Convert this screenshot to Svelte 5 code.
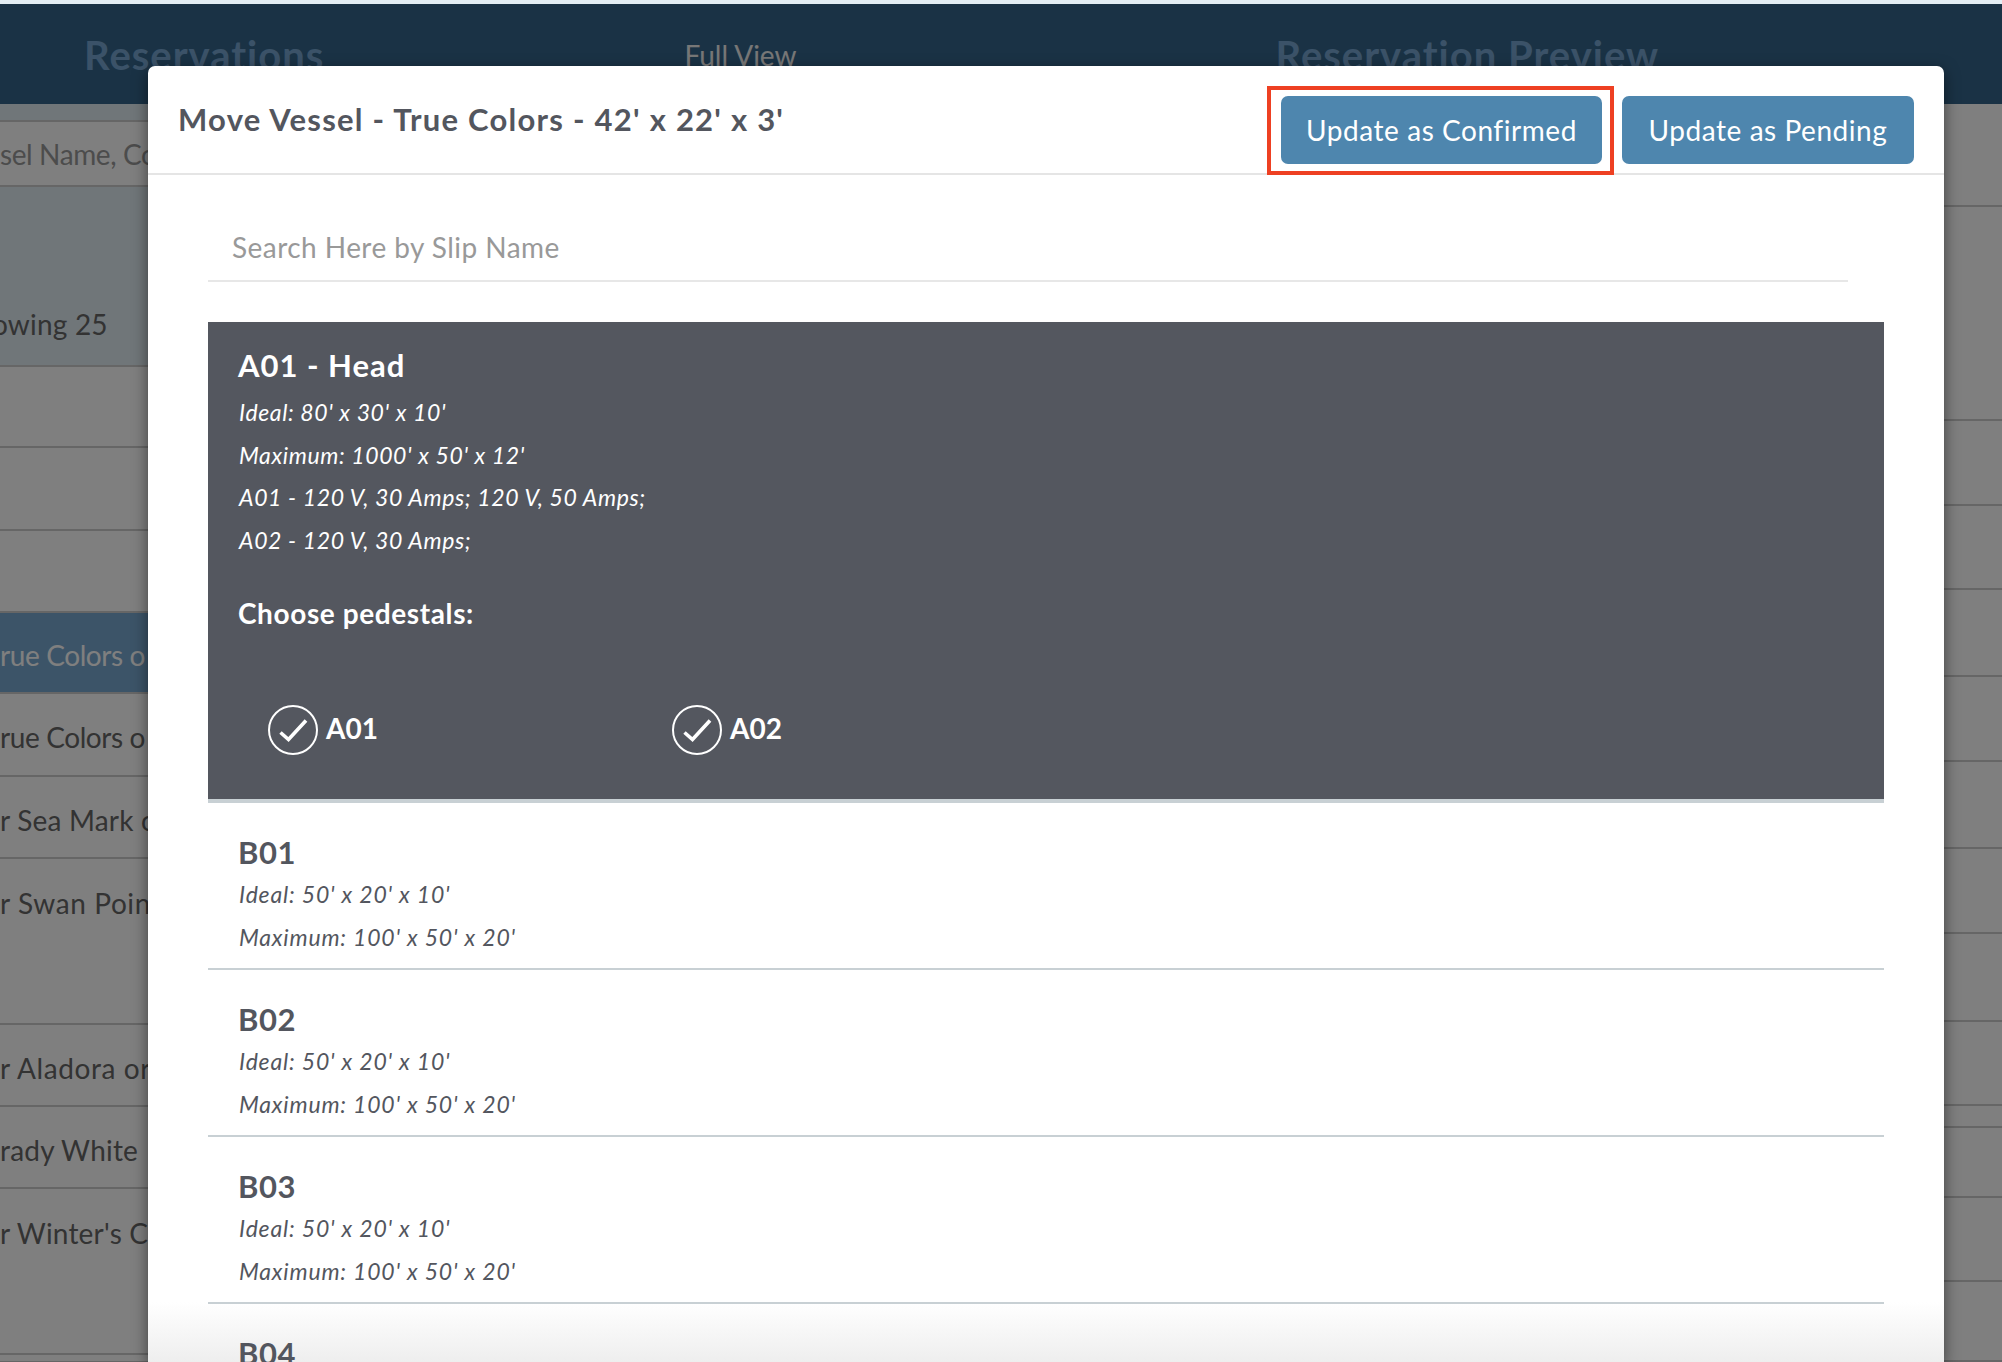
<script>
  const leftRows = [
    { h: 16, cls: 'tint' },
    { h: 67, text: 'sel Name, Co', cls: 'input narrow' },
    { h: 17, cls: 'tint' },
    { h: 163, text: 'owing 25', cls: 'tint end' },
    { h: 81 }, { h: 83 }, { h: 82 },
    { h: 81, text: 'rue Colors o', cls: 'active narrow' },
    { h: 83, text: 'rue Colors o', cls: 'narrow' },
    { h: 82, text: 'r Sea Mark o' },
    { h: 166, text: 'r Swan Poin', cls: 'top wide' },
    { h: 82, text: 'r Aladora or', cls: 'wide' },
    { h: 82, text: 'rady White' },
    { h: 166, text: "r Winter's C", cls: 'top' },
    { h: 8 }
  ];
  const rightRows = [103, 214, 85, 84, 87, 85, 87, 85, 88, 84, 22, 70, 84, 80];
  const slips = ['B01', 'B02', 'B03', 'B04'];
  const pedestals = ['A01', 'A02'];
</script>

<div class="page">
  <div class="strip"></div>
  <div class="app">
    <header class="topbar">
      <h1 class="t-res">Reservations</h1>
      <span class="t-full">Full View</span>
      <h1 class="t-prev">Reservation Preview</h1>
    </header>
    <div class="content">
      <div class="col-left">
        {#each leftRows as r}
          <div class="row {r.cls ?? ''}" style="height:{r.h}px">{r.text ?? ''}</div>
        {/each}
      </div>
      <div class="col-right">
        {#each rightRows as h}
          <div class="row" style="height:{h}px"></div>
        {/each}
      </div>
    </div>
  </div>

  <div class="backdrop"></div>

  <section class="modal">
    <div class="fade"></div>
    <div class="modal-head">
      <h2>Move Vessel - True Colors - 42' x 22' x 3'</h2>
      <div class="actions">
        <button class="btn confirm">Update as Confirmed</button>
        <button class="btn pending">Update as Pending</button>
      </div>
    </div>
    <div class="modal-body">
      <div class="search">Search Here by Slip Name</div>
      <div class="slip selected">
        <h3>A01 - Head</h3>
        <p>Ideal: 80' x 30' x 10'</p>
        <p>Maximum: 1000' x 50' x 12'</p>
        <p>A01 - 120 V, 30 Amps; 120 V, 50 Amps;</p>
        <p>A02 - 120 V, 30 Amps;</p>
        <h4>Choose pedestals:</h4>
        <div class="pedestals">
          {#each pedestals as p}
            <div class="pedestal">
              <svg width="50" height="50" viewBox="0 0 50 50" fill="none" stroke="#fff">
                <circle cx="25" cy="25" r="24" stroke-width="2" />
                <path d="M12.5 27.5 L20.5 34.5 L38 15.5" stroke-width="3.6" />
              </svg>
              <span>{p}</span>
            </div>
          {/each}
        </div>
      </div>
      {#each slips as s}
        <div class="slip">
          <h3>{s}</h3>
          <p>Ideal: 50' x 20' x 10'</p>
          <p>Maximum: 100' x 50' x 20'</p>
        </div>
      {/each}
    </div>
  </section>

  <div class="annotation"></div>
</div>

<style>
  :global(body) { margin: 0; }
  .page {
    position: relative;
    height: 1362px;
    overflow: hidden;
    background: #fff;
    font-family: Lato, "Open Sans", sans-serif;
    color: #666;
  }
  .strip { height: 4px; background: #e4eef4; }
  .topbar {
    position: relative;
    height: 100px;
    background: #34648a;
    display: flex;
    align-items: flex-start;
    padding-left: 84px;
    box-sizing: border-box;
  }
  .topbar h1 { margin: 0; font-size: 40px; font-weight: 700; line-height: 50px; color: #76a4d0; padding-top: 26px; letter-spacing: 1px; }
  .t-full { margin-left: 360px; padding-top: 26px; font-size: 28px; line-height: 50px; color: #eee; }
  .topbar .t-prev { margin-left: 479px; }
  .content { display: flex; }
  .col-left { width: 1000px; flex: none; }
  .col-right { flex: 1; }
  .row {
    box-sizing: border-box;
    border-bottom: 2px solid #ccc;
    display: flex;
    align-items: center;
    white-space: nowrap;
    overflow: hidden;
    font-size: 28px;
    letter-spacing: 0.2px;
    padding-top: 5px;
  }
  .tint { background: #e0ecf2; border-bottom-width: 0; padding-top: 0; }
  .tint.end { border-bottom-width: 2px; align-items: flex-end; padding-bottom: 24px; text-indent: -8px; }
  .input { border-top: 2px solid #ccc; border-bottom: 2px solid #ccc; color: #999; background: #fff; padding-top: 0; }
  .active { background: #78a8d0; color: #fff; }
  .row.top { align-items: flex-start; padding-top: 27px; }
  .row.narrow { letter-spacing: -0.4px; }
  .row.wide { letter-spacing: 0.6px; }
  .backdrop { position: absolute; inset: 4px 0 0 0; background: rgba(0, 0, 0, 0.5); }
  .modal {
    position: absolute;
    top: 66px;
    left: 148px;
    width: 1796px;
    height: 1296px;
    overflow: hidden;
    background: #fff;
    border-radius: 7px 7px 0 0;
    box-shadow: 0 5px 15px rgba(0, 0, 0, 0.5);
    color: #53565e;
  }
  .modal-head {
    position: relative;
    box-sizing: border-box;
    height: 109px;
    border-bottom: 2px solid #e5e5e5;
    display: flex;
    justify-content: space-between;
    padding: 29px 30px 0;
  }
  .modal-head h2 { margin: 0; font-size: 31px; font-weight: 700; line-height: 48px; letter-spacing: 1.25px; }
  .actions { display: flex; gap: 20px; padding-top: 1px; }
  .btn {
    height: 68px;
    border: 0;
    border-radius: 7px;
    background: #4e86ae;
    color: #fff;
    font: 400 28px Lato, sans-serif;
    letter-spacing: 0.55px;
    box-sizing: border-box;
    text-align: center;
    padding: 0;
  }
  .confirm { width: 321px; }
  .pending { width: 292px; }
  .modal-body { position: relative; padding: 0 60px; }
  .search {
    box-sizing: border-box;
    width: 1640px;
    height: 107px;
    padding: 49px 0 0 24px;
    border-bottom: 2px solid #e7e7e7;
    font-size: 28px;
    line-height: 46px;
    color: #999;
    letter-spacing: 0.45px;
  }
  .slip {
    box-sizing: border-box;
    padding: 29px 30px 10px;
    border-bottom: 2px solid #c8d0d4;
  }
  .slip h3 { margin: 0 0 1px; font-size: 31px; line-height: 40px; font-weight: 700; letter-spacing: 0.6px; }
  .slip p { margin: 0 0 0 1px; font-size: 23px; line-height: 42.5px; font-style: italic; letter-spacing: 0.82px; }
  .selected {
    margin-top: 40px;
    padding: 23px 30px 44px;
    border-bottom-width: 4px;
    background: #54575f;
    color: #fff;
  }
  .selected h3 { margin-bottom: 6px; letter-spacing: 1px; }
  .selected p { letter-spacing: 0.62px; }
  .selected h4 { margin: 32px 0 0; font-size: 28px; line-height: 40px; font-weight: 700; letter-spacing: 0.6px; }
  .pedestals { display: flex; padding: 72px 0 0 30px; }
  .pedestal { width: 404px; display: flex; align-items: center; gap: 8px; font-size: 28px; font-weight: 700; }
  .pedestal span { margin-bottom: 4px; }
  .pedestal svg { display: block; flex: none; }
  .fade {
    position: absolute;
    left: 0; right: 0; bottom: 0;
    height: 60px;
    background: linear-gradient(rgba(238, 238, 238, 0), rgba(238, 238, 238, 1));
  }
  .annotation {
    position: absolute;
    left: 1267px;
    top: 86px;
    width: 347px;
    height: 89px;
    box-sizing: border-box;
    border: 4px solid #ee4022;
  }
</style>
